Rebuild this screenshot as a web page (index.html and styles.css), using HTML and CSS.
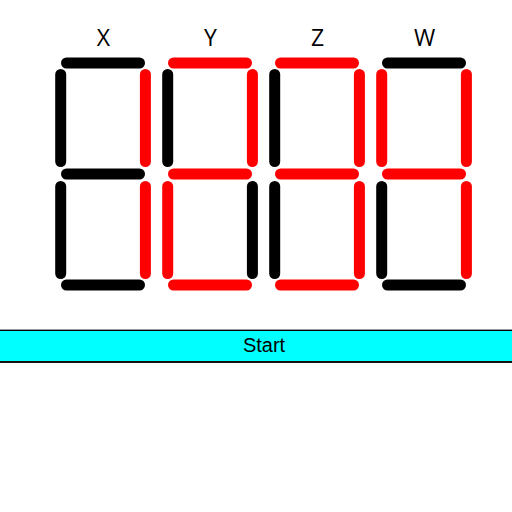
FILE: index.html
```html
<!DOCTYPE html>
<html lang="en">
<head>
  <meta charset="UTF-8" />
  <title>Seven Segment</title>
  <link rel="stylesheet" href="styles.css">
</head>
<body>
  <!-- Digits -->
  <div class="display">
    <div class="digit">
      <div class="label">X</div>
      <svg class="segments" width="107" height="240" viewBox="0 0 107 240">
        <line class="off" x1="16.5" y1="9" x2="89.5" y2="9"/>
        <line class="on" x1="95.4" y1="20.5" x2="95.4" y2="107.5"/>
        <line class="on" x1="95.4" y1="132.5" x2="95.4" y2="219.5"/>
        <line class="off" x1="16.5" y1="231" x2="89.5" y2="231"/>
        <line class="off" x1="10.7" y1="132.5" x2="10.7" y2="219.5"/>
        <line class="off" x1="10.7" y1="20.5" x2="10.7" y2="107.5"/>
        <line class="off" x1="16.5" y1="120" x2="89.5" y2="120"/>
      </svg>
    </div>
    <div class="digit">
      <div class="label">Y</div>
      <svg class="segments" width="107" height="240" viewBox="0 0 107 240">
        <line class="on" x1="16.5" y1="9" x2="89.5" y2="9"/>
        <line class="on" x1="95.4" y1="20.5" x2="95.4" y2="107.5"/>
        <line class="off" x1="95.4" y1="132.5" x2="95.4" y2="219.5"/>
        <line class="on" x1="16.5" y1="231" x2="89.5" y2="231"/>
        <line class="on" x1="10.7" y1="132.5" x2="10.7" y2="219.5"/>
        <line class="off" x1="10.7" y1="20.5" x2="10.7" y2="107.5"/>
        <line class="on" x1="16.5" y1="120" x2="89.5" y2="120"/>
      </svg>
    </div>
    <div class="digit">
      <div class="label">Z</div>
      <svg class="segments" width="107" height="240" viewBox="0 0 107 240">
        <line class="on" x1="16.5" y1="9" x2="89.5" y2="9"/>
        <line class="on" x1="95.4" y1="20.5" x2="95.4" y2="107.5"/>
        <line class="on" x1="95.4" y1="132.5" x2="95.4" y2="219.5"/>
        <line class="on" x1="16.5" y1="231" x2="89.5" y2="231"/>
        <line class="off" x1="10.7" y1="132.5" x2="10.7" y2="219.5"/>
        <line class="off" x1="10.7" y1="20.5" x2="10.7" y2="107.5"/>
        <line class="on" x1="16.5" y1="120" x2="89.5" y2="120"/>
      </svg>
    </div>
    <div class="digit">
      <div class="label">W</div>
      <svg class="segments" width="107" height="240" viewBox="0 0 107 240">
        <line class="off" x1="16.5" y1="9" x2="89.5" y2="9"/>
        <line class="on" x1="95.4" y1="20.5" x2="95.4" y2="107.5"/>
        <line class="on" x1="95.4" y1="132.5" x2="95.4" y2="219.5"/>
        <line class="off" x1="16.5" y1="231" x2="89.5" y2="231"/>
        <line class="off" x1="10.7" y1="132.5" x2="10.7" y2="219.5"/>
        <line class="on" x1="10.7" y1="20.5" x2="10.7" y2="107.5"/>
        <line class="on" x1="16.5" y1="120" x2="89.5" y2="120"/>
      </svg>
    </div>
  </div>

  <button class="start">Start</button>
</body>
</html>
```

FILE: styles.css
```css
body {
  margin: 0;
  background-color: white;
}

/* Digits */
.display {
  display: flex;
  padding: 20px 0 0 50px;
}

.digit {
  width: 107px;
  display: flex;
  flex-direction: column;
  align-items: center;
}

.label {
  height: 34px;
  line-height: 34px;
  font-family: 'Open Sans', sans-serif;
  font-size: 23px;
  color: black;
}

.segments {
  display: block;
}

.segments line {
  stroke-width: 11;
  stroke-linecap: round;
}

.segments .on {
  stroke: #ff0000;
}

.segments .off {
  stroke: #000000;
}

/* Start button */
.start {
  display: block;
  width: 100%;
  height: 33px;
  margin-top: 36px;
  padding: 0 0 1px 16px;
  background-color: #00ffff;
  border: none;
  border-top: 1px solid black;
  border-bottom: 2px solid #111;
  box-shadow: 0 -1px 0 #999;
  font-family: 'Liberation Sans', Arial, sans-serif;
  font-size: 20px;
  color: black;
}
```
